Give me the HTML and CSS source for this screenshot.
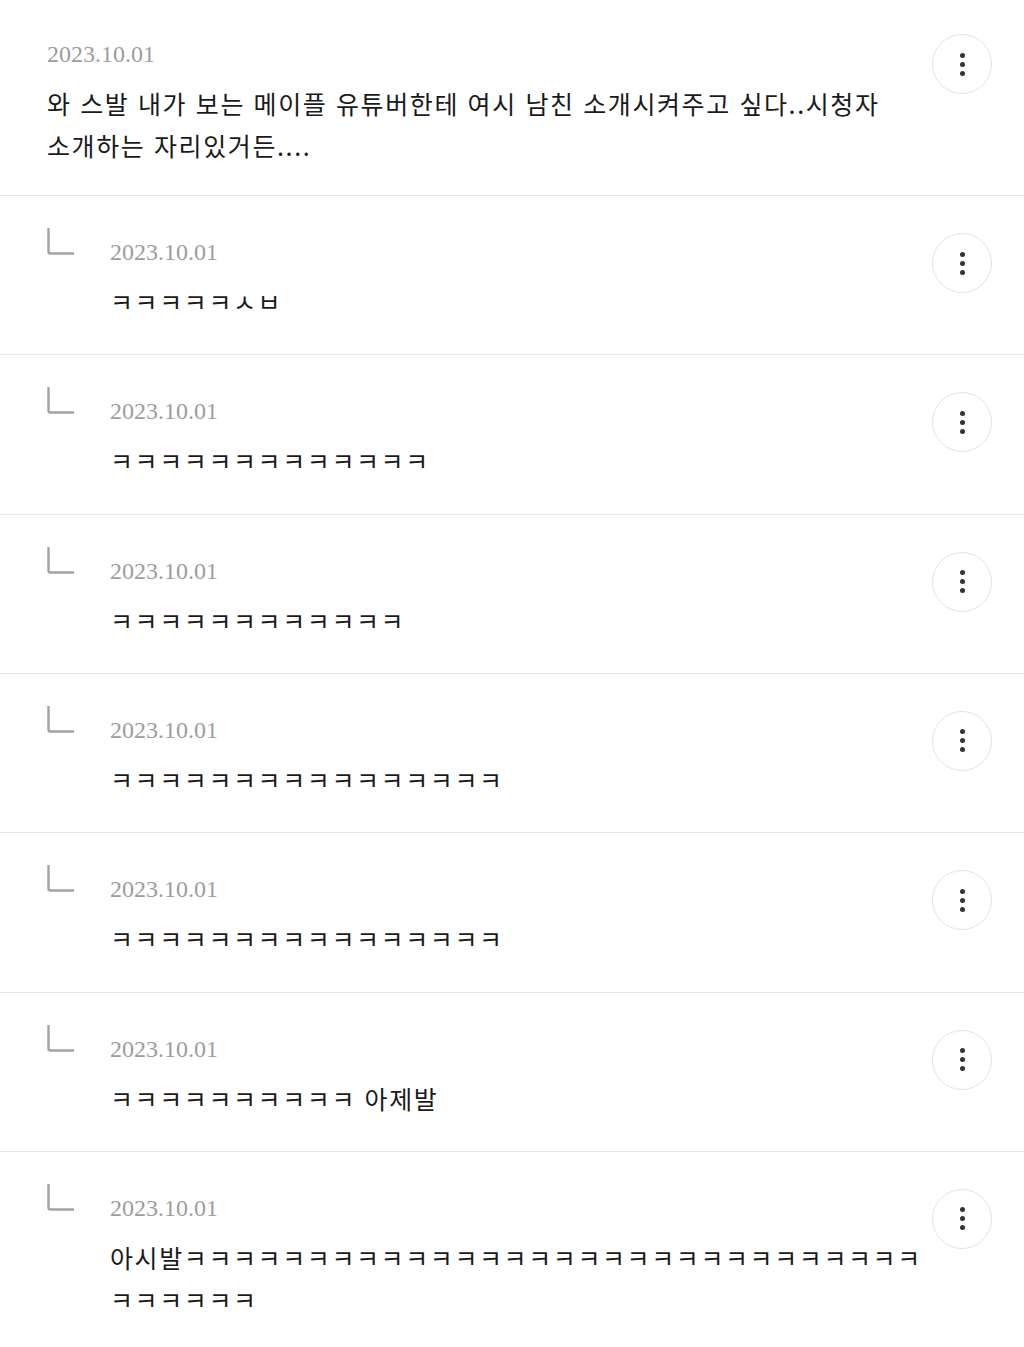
FILE: index.html
```html
<!DOCTYPE html>
<html lang="ko">
<head>
<meta charset="utf-8">
<title>댓글</title>
<link rel="stylesheet" href="styles.css">
</head>
<body>
<ul class="comments">
  <li class="comment">
    <div class="body">
      <div class="date">2023.10.01</div>
      <p class="text">와 스발 내가 보는 메이플 유튜버한테 여시 남친 소개시켜주고 싶다..시청자 소개하는 자리있거든....</p>
    </div>
    <button class="more" type="button" aria-label="더보기"><span></span><span></span><span></span></button>
  </li>
  <li class="comment reply">
    <svg class="reply-icon" width="28" height="28" viewBox="0 0 28 28"><path d="M1.5 0 V23.5 Q1.5 25.5 3.5 25.5 H27" fill="none" stroke="#a3a3a3" stroke-width="2.4"/></svg>
    <div class="body">
      <div class="date">2023.10.01</div>
      <p class="text">ㅋㅋㅋㅋㅋㅅㅂ</p>
    </div>
    <button class="more" type="button" aria-label="더보기"><span></span><span></span><span></span></button>
  </li>
  <li class="comment reply">
    <svg class="reply-icon" width="28" height="28" viewBox="0 0 28 28"><path d="M1.5 0 V23.5 Q1.5 25.5 3.5 25.5 H27" fill="none" stroke="#a3a3a3" stroke-width="2.4"/></svg>
    <div class="body">
      <div class="date">2023.10.01</div>
      <p class="text">ㅋㅋㅋㅋㅋㅋㅋㅋㅋㅋㅋㅋㅋ</p>
    </div>
    <button class="more" type="button" aria-label="더보기"><span></span><span></span><span></span></button>
  </li>
  <li class="comment reply">
    <svg class="reply-icon" width="28" height="28" viewBox="0 0 28 28"><path d="M1.5 0 V23.5 Q1.5 25.5 3.5 25.5 H27" fill="none" stroke="#a3a3a3" stroke-width="2.4"/></svg>
    <div class="body">
      <div class="date">2023.10.01</div>
      <p class="text">ㅋㅋㅋㅋㅋㅋㅋㅋㅋㅋㅋㅋ</p>
    </div>
    <button class="more" type="button" aria-label="더보기"><span></span><span></span><span></span></button>
  </li>
  <li class="comment reply">
    <svg class="reply-icon" width="28" height="28" viewBox="0 0 28 28"><path d="M1.5 0 V23.5 Q1.5 25.5 3.5 25.5 H27" fill="none" stroke="#a3a3a3" stroke-width="2.4"/></svg>
    <div class="body">
      <div class="date">2023.10.01</div>
      <p class="text">ㅋㅋㅋㅋㅋㅋㅋㅋㅋㅋㅋㅋㅋㅋㅋㅋ</p>
    </div>
    <button class="more" type="button" aria-label="더보기"><span></span><span></span><span></span></button>
  </li>
  <li class="comment reply">
    <svg class="reply-icon" width="28" height="28" viewBox="0 0 28 28"><path d="M1.5 0 V23.5 Q1.5 25.5 3.5 25.5 H27" fill="none" stroke="#a3a3a3" stroke-width="2.4"/></svg>
    <div class="body">
      <div class="date">2023.10.01</div>
      <p class="text">ㅋㅋㅋㅋㅋㅋㅋㅋㅋㅋㅋㅋㅋㅋㅋㅋ</p>
    </div>
    <button class="more" type="button" aria-label="더보기"><span></span><span></span><span></span></button>
  </li>
  <li class="comment reply">
    <svg class="reply-icon" width="28" height="28" viewBox="0 0 28 28"><path d="M1.5 0 V23.5 Q1.5 25.5 3.5 25.5 H27" fill="none" stroke="#a3a3a3" stroke-width="2.4"/></svg>
    <div class="body">
      <div class="date">2023.10.01</div>
      <p class="text">ㅋㅋㅋㅋㅋㅋㅋㅋㅋㅋ 아제발</p>
    </div>
    <button class="more" type="button" aria-label="더보기"><span></span><span></span><span></span></button>
  </li>
  <li class="comment reply last">
    <svg class="reply-icon" width="28" height="28" viewBox="0 0 28 28"><path d="M1.5 0 V23.5 Q1.5 25.5 3.5 25.5 H27" fill="none" stroke="#a3a3a3" stroke-width="2.4"/></svg>
    <div class="body">
      <div class="date">2023.10.01</div>
      <p class="text">아시발ㅋㅋㅋㅋㅋㅋㅋㅋㅋㅋㅋㅋㅋㅋㅋㅋㅋㅋㅋㅋㅋㅋㅋㅋㅋㅋㅋㅋㅋㅋㅋㅋㅋㅋㅋㅋ</p>
    </div>
    <button class="more" type="button" aria-label="더보기"><span></span><span></span><span></span></button>
  </li>
</ul>
</body>
</html>
```
FILE: styles.css
```css
html, body {
  margin: 0;
  padding: 0;
  background: #ffffff;
}

body {
  font-family: "Noto Sans CJK KR", "Noto Sans", sans-serif;
  color: #111111;
}

.comments {
  list-style: none;
  margin: 0;
  padding: 0;
}

.comment {
  position: relative;
  display: flex;
  align-items: flex-start;
  padding: 39px 89px 29px 47px;
  border-bottom: 1px solid #e6e6e6;
}

.comment.reply {
  padding: 32px 89px 32.33px 47px;
}

.comment.last {
  border-bottom: none;
  padding-bottom: 27px;
}

.reply-icon {
  flex: none;
  display: block;
  width: 28px;
  height: 28px;
  margin-right: 35px;
}

.body {
  flex: 1;
  min-width: 0;
}

.reply .body {
  padding-top: 9px;
}

.date {
  font-family: "Liberation Serif", "DejaVu Serif", serif;
  font-size: 24px;
  line-height: 30px;
  color: #9d9d9d;
}

.text {
  margin: 13px 0 0;
  font-size: 25px;
  line-height: 42px;
  letter-spacing: 1.6px;
  color: #1a1a1a;
  word-break: keep-all;
  overflow-wrap: anywhere;
}

.reply .text {
  word-break: break-all;
}

.more {
  position: absolute;
  top: 34px;
  right: 32px;
  width: 60px;
  height: 60px;
  padding: 0;
  border: 1px solid #e3e3e3;
  border-radius: 50%;
  background: #ffffff;
  display: flex;
  flex-direction: column;
  align-items: center;
  justify-content: center;
  gap: 4px;
  cursor: pointer;
}

.reply .more {
  top: 37px;
}

.more span {
  display: block;
  width: 5px;
  height: 5px;
  border-radius: 50%;
  background: #333333;
}
```
